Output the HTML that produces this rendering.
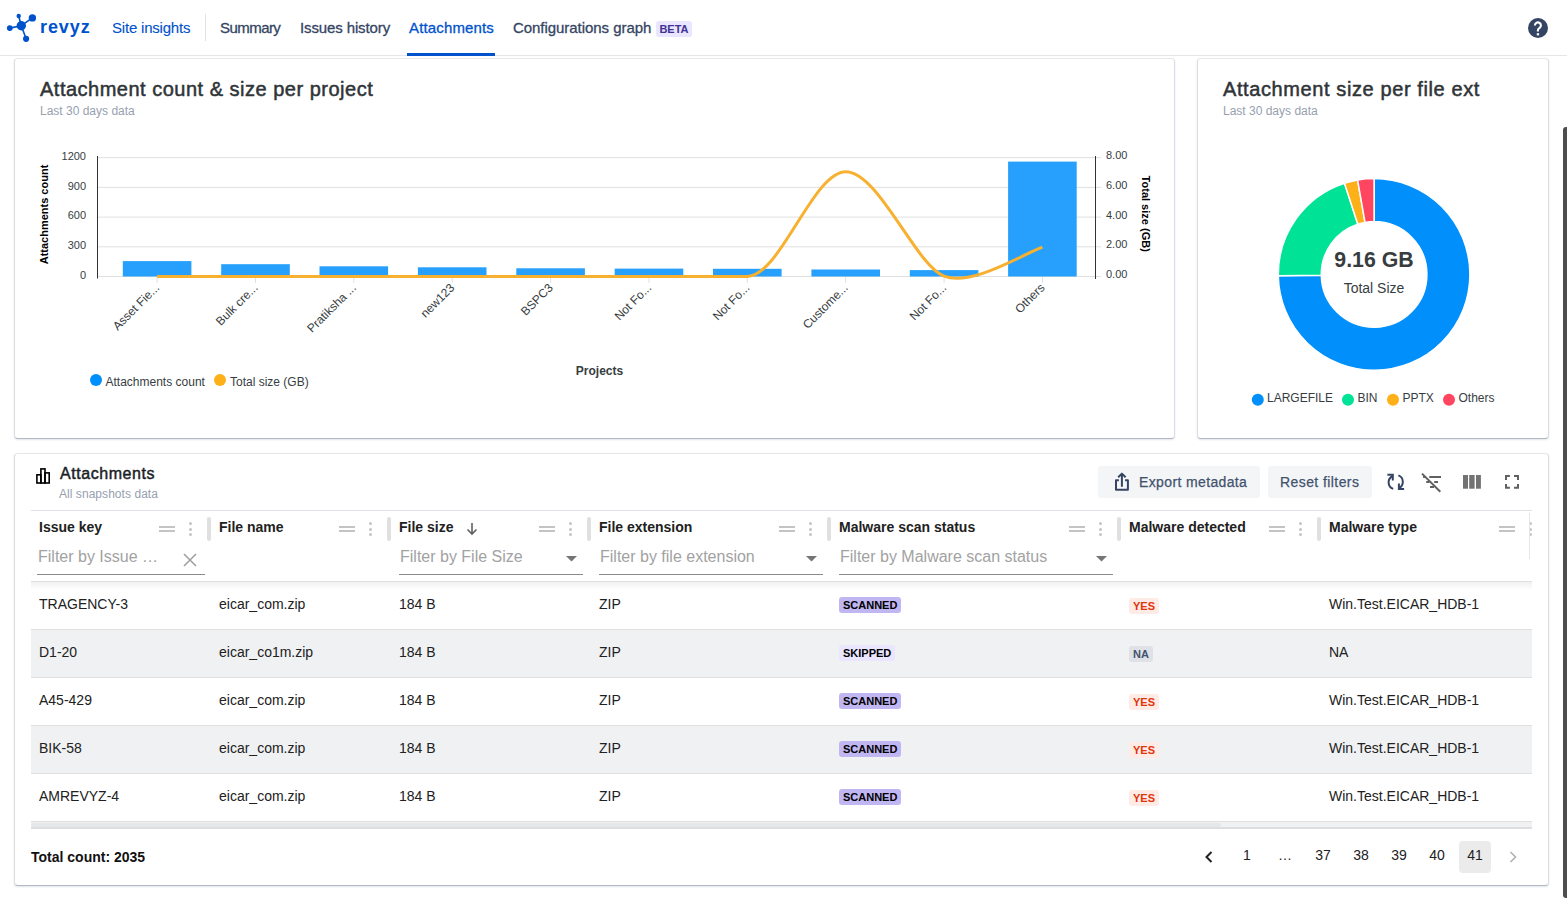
<!DOCTYPE html>
<html><head><meta charset="utf-8">
<style>
*{box-sizing:border-box;margin:0;padding:0}
html,body{width:1567px;height:898px;overflow:hidden;background:#fff;font-family:"Liberation Sans",sans-serif;position:relative}
.abs{position:absolute;white-space:nowrap}
.nav{position:absolute;left:0;top:0;width:1567px;height:56px;border-bottom:1px solid #e4e6ea;background:#fff}
.navt{position:absolute;top:18px;font-size:15px;line-height:20px;color:#344563;white-space:nowrap;-webkit-text-stroke:0.3px}
.card{position:absolute;background:#fff;border-radius:4px;border:1px solid #d9dce2;border-top-color:#e6e8ec;border-bottom-color:#b3b9c4;box-shadow:0 1px 2px rgba(9,30,66,0.12)}
.ctitle{position:absolute;font-size:20px;line-height:24px;color:#2f3437;white-space:nowrap;-webkit-text-stroke:0.5px #2f3437;letter-spacing:0.5px}
.csub{position:absolute;font-size:12px;line-height:14px;color:#97a0af;white-space:nowrap}
.scroll{position:absolute;left:1563px;top:127px;width:4px;height:771px;background:#4d4d4d;border-radius:3px 0 0 3px}
</style></head><body>
<div class="nav">
  <svg class="abs" style="left:0;top:0" width="40" height="50" viewBox="0 0 40 50">
    <g stroke="#0052cc" stroke-width="1.6"><line x1="21.3" y1="25.7" x2="18.7" y2="16"/><line x1="21.3" y1="25.7" x2="32.4" y2="17.9"/><line x1="21.3" y1="25.7" x2="9.8" y2="28.1"/><line x1="21.3" y1="25.7" x2="26.1" y2="38.8"/></g>
    <g fill="#0052cc"><circle cx="21.3" cy="25.7" r="4.7"/><circle cx="18.7" cy="16" r="2.2"/><circle cx="32.4" cy="17.9" r="3.7"/><circle cx="9.8" cy="28.1" r="2.9"/><circle cx="26.1" cy="38.8" r="3.1"/></g>
  </svg>
  <div class="abs" style="left:40px;top:15px;font-size:18px;line-height:24px;font-weight:bold;color:#0052cc;letter-spacing:0.9px">revyz</div>
  <div class="navt" style="left:112px;color:#0052cc;letter-spacing:-0.2px;-webkit-text-stroke:0.1px">Site insights</div>
  <div class="abs" style="left:205px;top:14px;width:1px;height:27px;background:#dfe1e6"></div>
  <div class="navt" style="left:220px;letter-spacing:-0.55px">Summary</div>
  <div class="navt" style="left:300px;letter-spacing:-0.12px">Issues history</div>
  <div class="navt" style="left:409px;color:#0052cc;letter-spacing:0.15px">Attachments</div>
  <div class="abs" style="left:407px;top:53px;width:88px;height:3px;background:#0052cc"></div>
  <div class="navt" style="left:513px;letter-spacing:-0.05px">Configurations graph</div>
  <div class="abs" style="left:656px;top:21px;width:36px;height:16px;background:#eae6ff;border-radius:3px;color:#403294;font-size:11px;font-weight:bold;line-height:16px;text-align:center">BETA</div>
  <svg class="abs" style="left:1528px;top:18px" width="20" height="20" viewBox="0 0 20 20"><circle cx="10" cy="10" r="10" fill="#344563"/><path d="M6.9 7.4A3 3 0 1 1 11.6 9.9Q9.9 10.9 9.9 12.3V13.6" fill="none" stroke="#fff" stroke-width="2.1"/><rect x="8.8" y="15.2" width="2.3" height="2.2" fill="#fff"/></svg>
</div>

<!-- card 1 -->
<div class="card" style="left:14px;top:58px;width:1161px;height:381px"></div>
<div class="ctitle" style="left:40px;top:77px">Attachment count &amp; size per project</div>
<div class="csub" style="left:40px;top:104px">Last 30 days data</div>

<!-- card 2 -->
<div class="card" style="left:1197px;top:58px;width:352px;height:381px"></div>
<div class="ctitle" style="left:1223px;top:77px;letter-spacing:0.6px">Attachment size per file ext</div>
<div class="csub" style="left:1223px;top:104px">Last 30 days data</div>

<!--CHART-->
<svg class="abs" style="left:0;top:0" width="1567" height="898" viewBox="0 0 1567 898">
<line x1="98" y1="157.6" x2="1095" y2="157.6" stroke="#e0e0e0" stroke-width="1"/>
<line x1="98" y1="187.4" x2="1095" y2="187.4" stroke="#e0e0e0" stroke-width="1"/>
<line x1="98" y1="217.1" x2="1095" y2="217.1" stroke="#e0e0e0" stroke-width="1"/>
<line x1="98" y1="246.8" x2="1095" y2="246.8" stroke="#e0e0e0" stroke-width="1"/>
<line x1="98" y1="276.5" x2="1095" y2="276.5" stroke="#e0e0e0" stroke-width="1"/>
<line x1="97.5" y1="156" x2="97.5" y2="278.5" stroke="#333" stroke-width="1"/>
<line x1="1095.5" y1="156" x2="1095.5" y2="279" stroke="#333" stroke-width="1"/>
<line x1="1096" y1="157.6" x2="1101" y2="157.6" stroke="#e0e0e0"/>
<line x1="1096" y1="187.4" x2="1101" y2="187.4" stroke="#e0e0e0"/>
<line x1="1096" y1="217.1" x2="1101" y2="217.1" stroke="#e0e0e0"/>
<line x1="1096" y1="246.8" x2="1101" y2="246.8" stroke="#e0e0e0"/>
<line x1="1096" y1="276.5" x2="1101" y2="276.5" stroke="#e0e0e0"/>
<rect x="122.8" y="261.1" width="68.6" height="15.4" fill="#26a0fc"/>
<rect x="221.2" y="264.2" width="68.6" height="12.3" fill="#26a0fc"/>
<rect x="319.5" y="266.3" width="68.6" height="10.2" fill="#26a0fc"/>
<rect x="417.9" y="267.3" width="68.6" height="9.2" fill="#26a0fc"/>
<rect x="516.3" y="268.3" width="68.6" height="8.2" fill="#26a0fc"/>
<rect x="614.7" y="268.6" width="68.6" height="7.9" fill="#26a0fc"/>
<rect x="713.0" y="268.8" width="68.6" height="7.7" fill="#26a0fc"/>
<rect x="811.4" y="269.5" width="68.6" height="7.0" fill="#26a0fc"/>
<rect x="909.8" y="270.1" width="68.6" height="6.4" fill="#26a0fc"/>
<rect x="1008.1" y="161.6" width="68.6" height="114.9" fill="#26a0fc"/>
<line x1="157.1" y1="277" x2="157.1" y2="283" stroke="#e0e0e0"/>
<line x1="255.5" y1="277" x2="255.5" y2="283" stroke="#e0e0e0"/>
<line x1="353.8" y1="277" x2="353.8" y2="283" stroke="#e0e0e0"/>
<line x1="452.2" y1="277" x2="452.2" y2="283" stroke="#e0e0e0"/>
<line x1="550.6" y1="277" x2="550.6" y2="283" stroke="#e0e0e0"/>
<line x1="649.0" y1="277" x2="649.0" y2="283" stroke="#e0e0e0"/>
<line x1="747.3" y1="277" x2="747.3" y2="283" stroke="#e0e0e0"/>
<line x1="845.7" y1="277" x2="845.7" y2="283" stroke="#e0e0e0"/>
<line x1="944.1" y1="277" x2="944.1" y2="283" stroke="#e0e0e0"/>
<line x1="1042.4" y1="277" x2="1042.4" y2="283" stroke="#e0e0e0"/>
<path d="M157.1 276.4 C173.5 276.4 222.7 276.4 255.5 276.4 C288.3 276.4 321.1 276.4 353.8 276.4 C386.6 276.4 419.4 276.4 452.2 276.4 C485.0 276.4 517.8 276.4 550.6 276.4 C583.4 276.4 616.2 276.4 649.0 276.4 C681.7 276.4 714.5 276.4 747.3 276.4 C780.1 276.4 812.9 171.8 845.7 171.7 C878.5 171.7 915.5 265.2 944.1 276.2 C972.6 287.2 1027.3 251.7 1042.4 247.2" fill="none" stroke="#f7b02f" stroke-width="3" stroke-linecap="butt"/>
<text x="86" y="159.9" text-anchor="end" font-size="11" font-family="Liberation Sans" fill="#373d3f">1200</text>
<text x="86" y="189.7" text-anchor="end" font-size="11" font-family="Liberation Sans" fill="#373d3f">900</text>
<text x="86" y="219.4" text-anchor="end" font-size="11" font-family="Liberation Sans" fill="#373d3f">600</text>
<text x="86" y="249.1" text-anchor="end" font-size="11" font-family="Liberation Sans" fill="#373d3f">300</text>
<text x="86" y="278.8" text-anchor="end" font-size="11" font-family="Liberation Sans" fill="#373d3f">0</text>
<text x="1106" y="159.1" font-size="11" font-family="Liberation Sans" fill="#373d3f">8.00</text>
<text x="1106" y="188.9" font-size="11" font-family="Liberation Sans" fill="#373d3f">6.00</text>
<text x="1106" y="218.6" font-size="11" font-family="Liberation Sans" fill="#373d3f">4.00</text>
<text x="1106" y="248.3" font-size="11" font-family="Liberation Sans" fill="#373d3f">2.00</text>
<text x="1106" y="278.0" font-size="11" font-family="Liberation Sans" fill="#373d3f">0.00</text>
<text transform="translate(48.3,214.5) rotate(-90)" text-anchor="middle" font-size="11" font-weight="bold" font-family="Liberation Sans" fill="#000">Attachments count</text>
<text transform="translate(1142,213.7) rotate(90)" text-anchor="middle" font-size="11" font-weight="bold" font-family="Liberation Sans" fill="#000">Total size (GB)</text>
<text transform="translate(160.1,288.5) rotate(-45)" text-anchor="end" font-size="12" font-family="Liberation Sans" fill="#373d3f">Asset Fie...</text>
<text transform="translate(258.5,288.5) rotate(-45)" text-anchor="end" font-size="12" font-family="Liberation Sans" fill="#373d3f">Bulk cre...</text>
<text transform="translate(356.8,288.5) rotate(-45)" text-anchor="end" font-size="12" font-family="Liberation Sans" fill="#373d3f">Pratiksha ...</text>
<text transform="translate(455.2,288.5) rotate(-45)" text-anchor="end" font-size="12" font-family="Liberation Sans" fill="#373d3f">new123</text>
<text transform="translate(553.6,288.5) rotate(-45)" text-anchor="end" font-size="12" font-family="Liberation Sans" fill="#373d3f">BSPC3</text>
<text transform="translate(652.0,288.5) rotate(-45)" text-anchor="end" font-size="12" font-family="Liberation Sans" fill="#373d3f">Not Fo...</text>
<text transform="translate(750.3,288.5) rotate(-45)" text-anchor="end" font-size="12" font-family="Liberation Sans" fill="#373d3f">Not Fo...</text>
<text transform="translate(848.7,288.5) rotate(-45)" text-anchor="end" font-size="12" font-family="Liberation Sans" fill="#373d3f">Custome...</text>
<text transform="translate(947.1,288.5) rotate(-45)" text-anchor="end" font-size="12" font-family="Liberation Sans" fill="#373d3f">Not Fo...</text>
<text transform="translate(1045.4,288.5) rotate(-45)" text-anchor="end" font-size="12" font-family="Liberation Sans" fill="#373d3f">Others</text>
<text x="599.5" y="375" text-anchor="middle" font-size="12" font-weight="bold" font-family="Liberation Sans" fill="#373d3f">Projects</text>
<circle cx="96" cy="380" r="6" fill="#008ffb"/>
<text x="105.5" y="385.5" font-size="12" font-family="Liberation Sans" fill="#373d3f">Attachments count</text>
<circle cx="220" cy="380" r="6" fill="#feb019"/>
<text x="230" y="385.5" font-size="12" font-family="Liberation Sans" fill="#373d3f">Total size (GB)</text>
<path d="M1374.10 178.60 A95.8 95.8 0 1 1 1278.31 275.74 L1321.31 275.14 A52.8 52.8 0 1 0 1374.10 221.60 Z" fill="#008ffb" stroke="#fff" stroke-width="1.5"/>
<path d="M1278.31 275.74 A95.8 95.8 0 0 1 1344.50 183.29 L1357.78 224.18 A52.8 52.8 0 0 0 1321.31 275.14 Z" fill="#00e396" stroke="#fff" stroke-width="1.5"/>
<path d="M1344.50 183.29 A95.8 95.8 0 0 1 1357.63 180.03 L1365.02 222.39 A52.8 52.8 0 0 0 1357.78 224.18 Z" fill="#feb019" stroke="#fff" stroke-width="1.5"/>
<path d="M1357.63 180.03 A95.8 95.8 0 0 1 1374.10 178.60 L1374.10 221.60 A52.8 52.8 0 0 0 1365.02 222.39 Z" fill="#ff4560" stroke="#fff" stroke-width="1.5"/>
<text x="1374" y="267.3" text-anchor="middle" font-size="21.3" font-weight="bold" font-family="Liberation Sans" fill="#373d3f">9.16 GB</text>
<text x="1374" y="292.8" text-anchor="middle" font-size="14" font-family="Liberation Sans" fill="#373d3f">Total Size</text>
<circle cx="1257.8" cy="399.8" r="6" fill="#008ffb"/>
<text x="1267.0" y="402" font-size="12" font-family="Liberation Sans" fill="#373d3f">LARGEFILE</text>
<circle cx="1348.0" cy="399.8" r="6" fill="#00e396"/>
<text x="1357.5" y="402" font-size="12" font-family="Liberation Sans" fill="#373d3f">BIN</text>
<circle cx="1393.0" cy="399.8" r="6" fill="#feb019"/>
<text x="1402.5" y="402" font-size="12" font-family="Liberation Sans" fill="#373d3f">PPTX</text>
<circle cx="1449.0" cy="399.8" r="6" fill="#ff4560"/>
<text x="1458.5" y="402" font-size="12" font-family="Liberation Sans" fill="#373d3f">Others</text>
</svg>
<!--/CHART-->
<!-- card 3 -->
<div class="card" style="left:14px;top:453px;width:1535px;height:433px"></div>

<!--TABLE-->
<svg class="abs" style="left:30px;top:462px" width="26" height="26" viewBox="0 0 26 26"><g fill="none" stroke="#000" stroke-width="1.6"><rect x="6.9" y="12.8" width="4" height="8.2"/><rect x="10.9" y="6.9" width="4.1" height="14.1"/><rect x="15" y="10.9" width="4.2" height="10.1"/></g></svg>
<div class="abs" style="left:60px;top:464px;font-size:16px;line-height:20px;color:#1a1d24;-webkit-text-stroke:0.45px #1a1d24;letter-spacing:0.55px">Attachments</div>
<div class="abs" style="left:59px;top:487px;font-size:12px;line-height:14px;color:#97a0af;letter-spacing:0.05px">All snapshots data</div>
<div class="abs" style="left:1098px;top:466px;width:162px;height:32px;background:#f4f5f7;border-radius:3px"></div>
<svg class="abs" style="left:1113px;top:471px" width="18" height="22" viewBox="0 0 18 22"><path d="M8.9 15.7V3M5.2 6.2L8.9 2.6L12.6 6.2M5.9 9.2H3V18.8H14.9V9.2H12.1" fill="none" stroke="#344563" stroke-width="2" stroke-linejoin="round"/></svg>
<div class="abs" style="left:1139px;top:473px;font-size:14px;line-height:18px;color:#42526e;letter-spacing:0.37px;-webkit-text-stroke:0.25px #42526e">Export metadata</div>
<div class="abs" style="left:1268px;top:466px;width:104px;height:32px;background:#f4f5f7;border-radius:3px"></div>
<div class="abs" style="left:1280px;top:473px;font-size:14px;line-height:18px;color:#42526e;letter-spacing:0.42px;-webkit-text-stroke:0.25px #42526e">Reset filters</div>
<svg class="abs" style="left:1380px;top:465px" width="70" height="35" viewBox="0 0 70 35"><g fill="none" stroke="#344563" stroke-width="2"><path d="M12.9 11A6.9 6.9 0 0 0 13.2 23.9M18.4 10.4A6.9 6.9 0 0 1 18.6 23.2"/><path d="M8.4 9.7H12.8V14.5M23.1 24.1H18.9V19.5" stroke-linecap="square" stroke-linejoin="miter"/></g><g fill="none" stroke="#616161" stroke-width="2"><path d="M43.1 12H45.3M49.3 12H61M46.2 16.9H49.6M54.2 16.9H58M50 22H54"/><path d="M42 8.6L60.3 26.8"/></g></svg>
<svg class="abs" style="left:1463px;top:475px" width="18" height="14" viewBox="0 0 18 14"><rect x="0" y="0" width="5" height="13.7" fill="#737373"/><rect x="6.2" y="0" width="5.4" height="13.7" fill="#737373"/><rect x="13" y="0" width="4.9" height="13.7" fill="#737373"/></svg>
<svg class="abs" style="left:1504px;top:474px" width="16" height="16" viewBox="0 0 16 16"><path d="M2 6V2H5.9M10 2H14V6M14 10V13.7H10M5.9 13.7H2V10" fill="none" stroke="#616161" stroke-width="2"/></svg>
<div class="abs" style="left:0;top:0;width:1532px;height:898px;overflow:hidden">
<div class="abs" style="left:31px;top:510px;width:1501px;height:1px;background:#dfe1e6"></div>
<div class="abs" style="left:31px;top:581px;width:1501px;height:1px;background:#e0e0e0"></div>
<div class="abs" style="left:39px;top:518px;font-size:14px;line-height:18px;font-weight:bold;color:#212121">Issue key</div>
<div class="abs" style="left:159px;top:526px;width:16px;height:2px;background:#c4c4c4"></div>
<div class="abs" style="left:159px;top:530px;width:16px;height:2px;background:#c4c4c4"></div>
<div class="abs" style="left:189.2px;top:522.0px;width:3px;height:3px;border-radius:50%;background:#c4c4c4"></div>
<div class="abs" style="left:189.2px;top:527.5px;width:3px;height:3px;border-radius:50%;background:#c4c4c4"></div>
<div class="abs" style="left:189.2px;top:533.0px;width:3px;height:3px;border-radius:50%;background:#c4c4c4"></div>
<div class="abs" style="left:207px;top:517px;width:4px;height:24px;border-radius:2px;background:#e0e0e0"></div>
<div class="abs" style="left:38px;top:547px;font-size:16px;line-height:19px;color:#a2a2a2">Filter by Issue …</div>
<div class="abs" style="left:37px;top:574px;width:168px;height:1px;background:#8a8a8a"></div>
<svg class="abs" style="left:182px;top:552px" width="16" height="16" viewBox="0 0 16 16"><path d="M2 2l12 12M14 2L2 14" stroke="#9e9e9e" stroke-width="1.5"/></svg>
<div class="abs" style="left:219px;top:518px;font-size:14px;line-height:18px;font-weight:bold;color:#212121">File name</div>
<div class="abs" style="left:339px;top:526px;width:16px;height:2px;background:#c4c4c4"></div>
<div class="abs" style="left:339px;top:530px;width:16px;height:2px;background:#c4c4c4"></div>
<div class="abs" style="left:369.2px;top:522.0px;width:3px;height:3px;border-radius:50%;background:#c4c4c4"></div>
<div class="abs" style="left:369.2px;top:527.5px;width:3px;height:3px;border-radius:50%;background:#c4c4c4"></div>
<div class="abs" style="left:369.2px;top:533.0px;width:3px;height:3px;border-radius:50%;background:#c4c4c4"></div>
<div class="abs" style="left:387px;top:517px;width:4px;height:24px;border-radius:2px;background:#e0e0e0"></div>
<div class="abs" style="left:399px;top:518px;font-size:14px;line-height:18px;font-weight:bold;color:#212121">File size</div>
<svg class="abs" style="left:464px;top:521px" width="16" height="16" viewBox="0 0 16 16"><path d="M8 2v11M3.5 8.5L8 13l4.5-4.5" fill="none" stroke="#616161" stroke-width="1.6"/></svg>
<div class="abs" style="left:539px;top:526px;width:16px;height:2px;background:#c4c4c4"></div>
<div class="abs" style="left:539px;top:530px;width:16px;height:2px;background:#c4c4c4"></div>
<div class="abs" style="left:569.2px;top:522.0px;width:3px;height:3px;border-radius:50%;background:#c4c4c4"></div>
<div class="abs" style="left:569.2px;top:527.5px;width:3px;height:3px;border-radius:50%;background:#c4c4c4"></div>
<div class="abs" style="left:569.2px;top:533.0px;width:3px;height:3px;border-radius:50%;background:#c4c4c4"></div>
<div class="abs" style="left:587px;top:517px;width:4px;height:24px;border-radius:2px;background:#e0e0e0"></div>
<div class="abs" style="left:400px;top:547px;font-size:16px;line-height:19px;color:#a2a2a2">Filter by File Size</div>
<div class="abs" style="left:399px;top:574px;width:184px;height:1px;background:#8a8a8a"></div>
<svg class="abs" style="left:566px;top:556px" width="11" height="6" viewBox="0 0 11 6"><path d="M0 0h11L5.5 5.5z" fill="#757575"/></svg>
<div class="abs" style="left:599px;top:518px;font-size:14px;line-height:18px;font-weight:bold;color:#212121">File extension</div>
<div class="abs" style="left:779px;top:526px;width:16px;height:2px;background:#c4c4c4"></div>
<div class="abs" style="left:779px;top:530px;width:16px;height:2px;background:#c4c4c4"></div>
<div class="abs" style="left:809.2px;top:522.0px;width:3px;height:3px;border-radius:50%;background:#c4c4c4"></div>
<div class="abs" style="left:809.2px;top:527.5px;width:3px;height:3px;border-radius:50%;background:#c4c4c4"></div>
<div class="abs" style="left:809.2px;top:533.0px;width:3px;height:3px;border-radius:50%;background:#c4c4c4"></div>
<div class="abs" style="left:827px;top:517px;width:4px;height:24px;border-radius:2px;background:#e0e0e0"></div>
<div class="abs" style="left:600px;top:547px;font-size:16px;line-height:19px;color:#a2a2a2">Filter by file extension</div>
<div class="abs" style="left:599px;top:574px;width:224px;height:1px;background:#8a8a8a"></div>
<svg class="abs" style="left:806px;top:556px" width="11" height="6" viewBox="0 0 11 6"><path d="M0 0h11L5.5 5.5z" fill="#757575"/></svg>
<div class="abs" style="left:839px;top:518px;font-size:14px;line-height:18px;font-weight:bold;color:#212121">Malware scan status</div>
<div class="abs" style="left:1069px;top:526px;width:16px;height:2px;background:#c4c4c4"></div>
<div class="abs" style="left:1069px;top:530px;width:16px;height:2px;background:#c4c4c4"></div>
<div class="abs" style="left:1099.2px;top:522.0px;width:3px;height:3px;border-radius:50%;background:#c4c4c4"></div>
<div class="abs" style="left:1099.2px;top:527.5px;width:3px;height:3px;border-radius:50%;background:#c4c4c4"></div>
<div class="abs" style="left:1099.2px;top:533.0px;width:3px;height:3px;border-radius:50%;background:#c4c4c4"></div>
<div class="abs" style="left:1117px;top:517px;width:4px;height:24px;border-radius:2px;background:#e0e0e0"></div>
<div class="abs" style="left:840px;top:547px;font-size:16px;line-height:19px;color:#a2a2a2">Filter by Malware scan status</div>
<div class="abs" style="left:839px;top:574px;width:274px;height:1px;background:#8a8a8a"></div>
<svg class="abs" style="left:1096px;top:556px" width="11" height="6" viewBox="0 0 11 6"><path d="M0 0h11L5.5 5.5z" fill="#757575"/></svg>
<div class="abs" style="left:1129px;top:518px;font-size:14px;line-height:18px;font-weight:bold;color:#212121">Malware detected</div>
<div class="abs" style="left:1269px;top:526px;width:16px;height:2px;background:#c4c4c4"></div>
<div class="abs" style="left:1269px;top:530px;width:16px;height:2px;background:#c4c4c4"></div>
<div class="abs" style="left:1299.2px;top:522.0px;width:3px;height:3px;border-radius:50%;background:#c4c4c4"></div>
<div class="abs" style="left:1299.2px;top:527.5px;width:3px;height:3px;border-radius:50%;background:#c4c4c4"></div>
<div class="abs" style="left:1299.2px;top:533.0px;width:3px;height:3px;border-radius:50%;background:#c4c4c4"></div>
<div class="abs" style="left:1317px;top:517px;width:4px;height:24px;border-radius:2px;background:#e0e0e0"></div>
<div class="abs" style="left:1329px;top:518px;font-size:14px;line-height:18px;font-weight:bold;color:#212121">Malware type</div>
<div class="abs" style="left:1499px;top:526px;width:16px;height:2px;background:#c4c4c4"></div>
<div class="abs" style="left:1499px;top:530px;width:16px;height:2px;background:#c4c4c4"></div>
<div class="abs" style="left:1529.2px;top:522.0px;width:3px;height:3px;border-radius:50%;background:#c4c4c4"></div>
<div class="abs" style="left:1529.2px;top:527.5px;width:3px;height:3px;border-radius:50%;background:#c4c4c4"></div>
<div class="abs" style="left:1529.2px;top:533.0px;width:3px;height:3px;border-radius:50%;background:#c4c4c4"></div>
<div class="abs" style="left:1547px;top:517px;width:4px;height:24px;border-radius:2px;background:#e0e0e0"></div>
<div class="abs" style="left:31px;top:582px;width:1501px;height:47px;background:#fff"></div>
<div class="abs" style="left:31px;top:629px;width:1501px;height:1px;background:#e0e0e0"></div>
<div class="abs" style="left:39px;top:595px;font-size:14px;line-height:18px;color:#212121">TRAGENCY-3</div>
<div class="abs" style="left:219px;top:595px;font-size:14px;line-height:18px;color:#212121">eicar_com.zip</div>
<div class="abs" style="left:399px;top:595px;font-size:14px;line-height:18px;color:#212121">184 B</div>
<div class="abs" style="left:599px;top:595px;font-size:14px;line-height:18px;color:#212121">ZIP</div>
<div class="abs" style="left:1329px;top:595px;font-size:14px;line-height:18px;color:#212121">Win.Test.EICAR_HDB-1</div>
<div class="abs" style="left:839px;top:597px;height:16px;padding:0 4px;border-radius:3px;background:#c0b6f2;color:#000;font-size:11px;line-height:16px;font-weight:bold">SCANNED</div>
<div class="abs" style="left:1129px;top:598px;height:16px;padding:0 4px;border-radius:3px;background:#ffebe6;color:#de350b;font-size:11px;line-height:16px;font-weight:bold">YES</div>
<div class="abs" style="left:31px;top:630px;width:1501px;height:47px;background:#f0f1f3"></div>
<div class="abs" style="left:31px;top:677px;width:1501px;height:1px;background:#e0e0e0"></div>
<div class="abs" style="left:39px;top:643px;font-size:14px;line-height:18px;color:#212121">D1-20</div>
<div class="abs" style="left:219px;top:643px;font-size:14px;line-height:18px;color:#212121">eicar_co1m.zip</div>
<div class="abs" style="left:399px;top:643px;font-size:14px;line-height:18px;color:#212121">184 B</div>
<div class="abs" style="left:599px;top:643px;font-size:14px;line-height:18px;color:#212121">ZIP</div>
<div class="abs" style="left:1329px;top:643px;font-size:14px;line-height:18px;color:#212121">NA</div>
<div class="abs" style="left:839px;top:645px;height:16px;padding:0 4px;border-radius:3px;background:#eae6ff;color:#000;font-size:11px;line-height:16px;font-weight:bold">SKIPPED</div>
<div class="abs" style="left:1129px;top:646px;height:16px;padding:0 4px;border-radius:3px;background:#dfe1e6;color:#42526e;font-size:11px;line-height:16px;font-weight:bold">NA</div>
<div class="abs" style="left:31px;top:678px;width:1501px;height:47px;background:#fff"></div>
<div class="abs" style="left:31px;top:725px;width:1501px;height:1px;background:#e0e0e0"></div>
<div class="abs" style="left:39px;top:691px;font-size:14px;line-height:18px;color:#212121">A45-429</div>
<div class="abs" style="left:219px;top:691px;font-size:14px;line-height:18px;color:#212121">eicar_com.zip</div>
<div class="abs" style="left:399px;top:691px;font-size:14px;line-height:18px;color:#212121">184 B</div>
<div class="abs" style="left:599px;top:691px;font-size:14px;line-height:18px;color:#212121">ZIP</div>
<div class="abs" style="left:1329px;top:691px;font-size:14px;line-height:18px;color:#212121">Win.Test.EICAR_HDB-1</div>
<div class="abs" style="left:839px;top:693px;height:16px;padding:0 4px;border-radius:3px;background:#c0b6f2;color:#000;font-size:11px;line-height:16px;font-weight:bold">SCANNED</div>
<div class="abs" style="left:1129px;top:694px;height:16px;padding:0 4px;border-radius:3px;background:#ffebe6;color:#de350b;font-size:11px;line-height:16px;font-weight:bold">YES</div>
<div class="abs" style="left:31px;top:726px;width:1501px;height:47px;background:#f0f1f3"></div>
<div class="abs" style="left:31px;top:773px;width:1501px;height:1px;background:#e0e0e0"></div>
<div class="abs" style="left:39px;top:739px;font-size:14px;line-height:18px;color:#212121">BIK-58</div>
<div class="abs" style="left:219px;top:739px;font-size:14px;line-height:18px;color:#212121">eicar_com.zip</div>
<div class="abs" style="left:399px;top:739px;font-size:14px;line-height:18px;color:#212121">184 B</div>
<div class="abs" style="left:599px;top:739px;font-size:14px;line-height:18px;color:#212121">ZIP</div>
<div class="abs" style="left:1329px;top:739px;font-size:14px;line-height:18px;color:#212121">Win.Test.EICAR_HDB-1</div>
<div class="abs" style="left:839px;top:741px;height:16px;padding:0 4px;border-radius:3px;background:#c0b6f2;color:#000;font-size:11px;line-height:16px;font-weight:bold">SCANNED</div>
<div class="abs" style="left:1129px;top:742px;height:16px;padding:0 4px;border-radius:3px;background:#ffebe6;color:#de350b;font-size:11px;line-height:16px;font-weight:bold">YES</div>
<div class="abs" style="left:31px;top:774px;width:1501px;height:47px;background:#fff"></div>
<div class="abs" style="left:31px;top:821px;width:1501px;height:1px;background:#e0e0e0"></div>
<div class="abs" style="left:39px;top:787px;font-size:14px;line-height:18px;color:#212121">AMREVYZ-4</div>
<div class="abs" style="left:219px;top:787px;font-size:14px;line-height:18px;color:#212121">eicar_com.zip</div>
<div class="abs" style="left:399px;top:787px;font-size:14px;line-height:18px;color:#212121">184 B</div>
<div class="abs" style="left:599px;top:787px;font-size:14px;line-height:18px;color:#212121">ZIP</div>
<div class="abs" style="left:1329px;top:787px;font-size:14px;line-height:18px;color:#212121">Win.Test.EICAR_HDB-1</div>
<div class="abs" style="left:839px;top:789px;height:16px;padding:0 4px;border-radius:3px;background:#c0b6f2;color:#000;font-size:11px;line-height:16px;font-weight:bold">SCANNED</div>
<div class="abs" style="left:1129px;top:790px;height:16px;padding:0 4px;border-radius:3px;background:#ffebe6;color:#de350b;font-size:11px;line-height:16px;font-weight:bold">YES</div>
<div class="abs" style="left:31px;top:582px;width:1501px;height:8px;background:linear-gradient(rgba(0,0,0,0.06),rgba(0,0,0,0))"></div>
<div class="abs" style="left:1529px;top:513px;width:1px;height:46px;background:#e6e6e6"></div>
</div>
<div class="abs" style="left:31px;top:822px;width:1501px;height:5px;background:#f0f1f3"></div>
<div class="abs" style="left:31px;top:823px;width:1190px;height:4px;background:#e6e7e9;border-radius:2px"></div>
<div class="abs" style="left:31px;top:827px;width:1501px;height:2px;background:#dedde2"></div>
<div class="abs" style="left:31px;top:848px;font-size:14px;line-height:18px;font-weight:bold;color:#111">Total count: 2035</div>
<svg class="abs" style="left:1201px;top:849px" width="16" height="16" viewBox="0 0 16 16"><path d="M10.5 3L5.5 8l5 5" fill="none" stroke="#212121" stroke-width="2"/></svg>
<div class="abs" style="left:1231px;top:845px;width:32px;text-align:center;font-size:14px;line-height:20px;color:#212121">1</div>
<div class="abs" style="left:1269px;top:845px;width:32px;text-align:center;font-size:14px;line-height:20px;color:#212121">…</div>
<div class="abs" style="left:1307px;top:845px;width:32px;text-align:center;font-size:14px;line-height:20px;color:#212121">37</div>
<div class="abs" style="left:1345px;top:845px;width:32px;text-align:center;font-size:14px;line-height:20px;color:#212121">38</div>
<div class="abs" style="left:1383px;top:845px;width:32px;text-align:center;font-size:14px;line-height:20px;color:#212121">39</div>
<div class="abs" style="left:1421px;top:845px;width:32px;text-align:center;font-size:14px;line-height:20px;color:#212121">40</div>
<div class="abs" style="left:1459px;top:841px;width:32px;height:32px;border-radius:4px;background:#ebebeb"></div>
<div class="abs" style="left:1459px;top:845px;width:32px;text-align:center;font-size:14px;line-height:20px;color:#212121">41</div>
<svg class="abs" style="left:1505px;top:849px" width="16" height="16" viewBox="0 0 16 16"><path d="M5.5 3l5 5-5 5" fill="none" stroke="#b0b0b0" stroke-width="1.6"/></svg>
<!--/TABLE-->
<div class="scroll"></div>
</body></html>
